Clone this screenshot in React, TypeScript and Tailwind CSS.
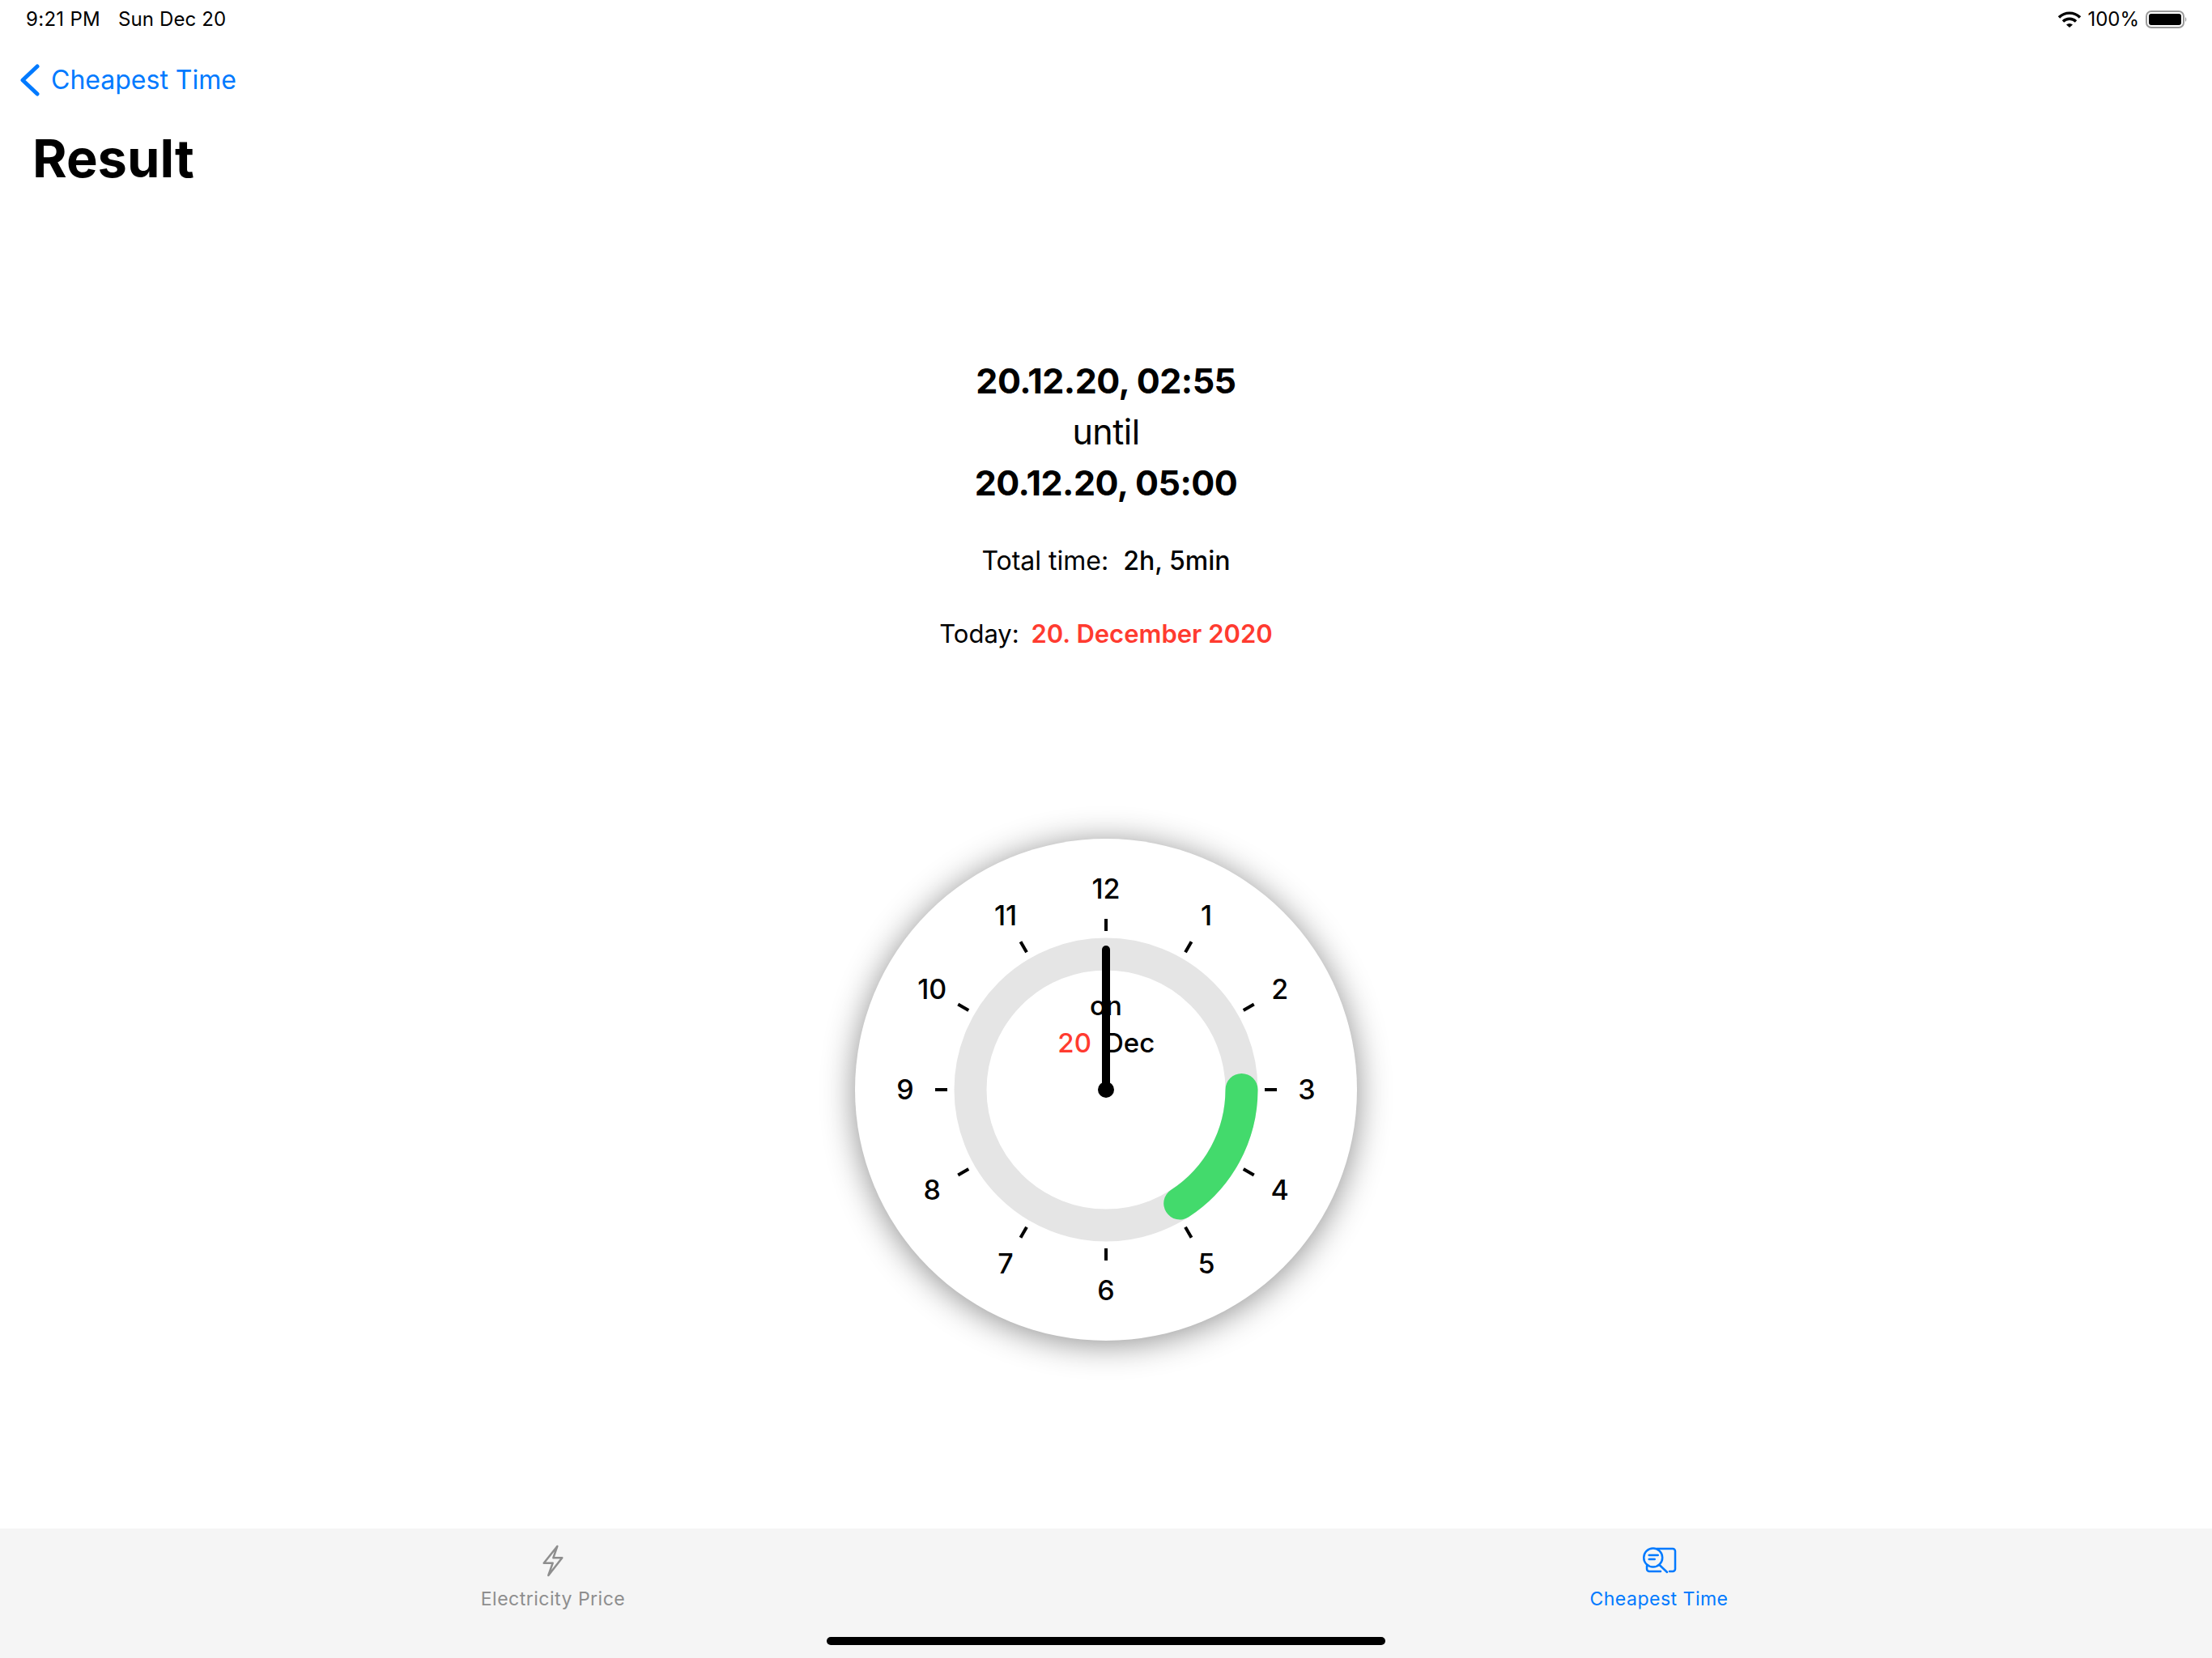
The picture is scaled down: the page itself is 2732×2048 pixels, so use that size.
const hours = [12, 1, 2, 3, 4, 5, 6, 7, 8, 9, 10, 11];

const StatusIcons = () => (
  <div className="flex items-center gap-[8px]">
    <svg width="28" height="20" viewBox="0 0 28 20">
      <path d="M1 7.5a18.5 18.5 0 0 1 26 0" fill="none" stroke="#000" strokeWidth="3.4" />
      <path d="M6 12.5a11.5 11.5 0 0 1 16 0" fill="none" stroke="#000" strokeWidth="3.4" />
      <path d="M10 16.5a6 6 0 0 1 8 0L14 20z" fill="#000" />
    </svg>
    <span>100%</span>
    <svg width="52" height="24" viewBox="0 0 52 24">
      <rect x="1" y="2" width="46" height="20" rx="6" fill="none" stroke="#9a9a9a" strokeWidth="2" />
      <rect x="4" y="5" width="40" height="14" rx="3" fill="#000" />
      <path d="M49 9a4 4 0 0 1 0 6z" fill="#9a9a9a" />
    </svg>
  </div>
);

const Clock = () => {
  const r = 167.5;
  const arcStart = (90 * Math.PI) / 180;
  const arcEnd = (147 * Math.PI) / 180;
  return (
    <div className="relative w-[620px] h-[620px] rounded-full bg-white shadow-[0_4px_40px_rgba(0,0,0,0.45)]">
      <svg className="absolute inset-0" width="620" height="620" viewBox="-310 -310 620 620">
        <circle r={r} fill="none" stroke="#e5e5e5" strokeWidth="40" />
        <path
          d={`M${r * Math.sin(arcStart)} ${-r * Math.cos(arcStart)}A${r} ${r} 0 0 1 ${r * Math.sin(arcEnd)} ${-r * Math.cos(arcEnd)}`}
          fill="none"
          stroke="#43da6c"
          strokeWidth="40"
          strokeLinecap="round"
        />
        {hours.map((h) => (
          <line
            key={h}
            x1="0"
            y1="-196"
            x2="0"
            y2="-211"
            stroke="#000"
            strokeWidth="4"
            transform={`rotate(${h * 30})`}
          />
        ))}
      </svg>
      {hours.map((h) => {
        const a = (h * 30 * Math.PI) / 180;
        return (
          <span
            key={h}
            className="absolute -translate-x-1/2 -translate-y-1/2 text-[34px] leading-none font-medium text-black"
            style={{ left: 310 + 248 * Math.sin(a), top: 310 - 248 * Math.cos(a) }}
          >
            {h}
          </span>
        );
      })}
      <div className="absolute left-0 right-0 top-[183px] flex flex-col items-center text-[33px] leading-[46px] font-medium text-black">
        <span>on</span>
        <div className="flex w-full">
          <span className="w-[292px] text-right text-[#ff3b30]">20</span>
          <span className="pl-[16px]">Dec</span>
        </div>
      </div>
      <svg className="absolute inset-0" width="620" height="620" viewBox="-310 -310 620 620">
        <line x1="0" y1="0" x2="0" y2="-173" stroke="#000" strokeWidth="10" strokeLinecap="round" />
        <circle r="10" fill="#000" />
      </svg>
    </div>
  );
};

export default function App() {
  return (
    <div className="relative w-[2732px] h-[2048px] flex flex-col bg-white text-black font-['Inter','Noto_Sans',sans-serif] overflow-hidden">
      <div className="h-[48px] flex items-center justify-between pl-[32px] pr-[30px] text-[24px] leading-none">
        <div className="flex gap-[22px]">
          <span className="tracking-[0.3px]">9:21 PM</span>
          <span className="tracking-[0.1px]">Sun Dec 20</span>
        </div>
        <StatusIcons />
      </div>

      <div className="h-[100px] flex items-center pl-[24px] pt-[2px] text-[#007aff] text-[32px]">
        <svg width="26" height="40" viewBox="0 0 26 40" className="mr-[13px]">
          <path d="M22 3L4 20l18 17" fill="none" stroke="#007aff" strokeWidth="5" strokeLinecap="round" strokeLinejoin="round" />
        </svg>
        <span>Cheapest Time</span>
      </div>

      <h1 className="pl-[40px] text-[65px] leading-[96px] font-bold">Result</h1>

      <main className="flex-1 flex flex-col items-center pt-[195px]">
        <div className="text-center text-[43px] leading-[63px]">
          <p className="font-bold tracking-[-0.5px]">20.12.20, 02:55</p>
          <p className="tracking-[-0.5px]">until</p>
          <p className="font-bold tracking-[-0.5px]">20.12.20, 05:00</p>
        </div>
        <p className="mt-[41px] text-[32px] leading-[48px]">
          Total time:&nbsp; <span className="font-[550]">2h, 5min</span>
        </p>
        <p className="mt-[42px] text-[31px] leading-[48px]">
          Today:&nbsp;<span className="ml-[6px] font-semibold text-[#ff3b30]">20. December 2020</span>
        </p>
        <div className="mt-[229px]">
          <Clock />
        </div>
      </main>

      <div className="h-[160px] grid grid-cols-2 bg-[#f5f5f5] text-[23px] tracking-[0.5px]">
        <div className="flex flex-col items-center pt-[17px] text-[#8e8e8e]">
          <svg width="36" height="46" viewBox="0 0 36 46">
            <path d="M23.300 5L6.700 25.700H17.700L12.300 41L29.300 19.300H18.300z" fill="none" stroke="#8e8e8e" strokeWidth="2.500" strokeLinejoin="round" />
          </svg>
          <span className="mt-[8px] leading-[32px]">Electricity Price</span>
        </div>
        <div className="flex flex-col items-center pt-[17px] text-[#007aff]">
          <svg width="46" height="46" viewBox="0 0 46 46" fill="none" stroke="#007aff" strokeWidth="2.500" strokeLinecap="round">
            <circle cx="15.700" cy="19" r="11.500" />
            <path d="M23.500 28L33 37" />
            <path d="M10.700 16H21.700M10.700 21H17.700" />
            <path d="M20 8H40a3 3 0 0 1 3 3V33a3 3 0 0 1-3 3H36" />
            <path d="M8 29V33a3 3 0 0 0 3 3H25" />
          </svg>
          <span className="mt-[8px] leading-[32px]">Cheapest Time</span>
        </div>
      </div>

      <div className="absolute left-[1021px] top-[2022px] w-[690px] h-[10px] rounded-full bg-black" />
    </div>
  );
}
